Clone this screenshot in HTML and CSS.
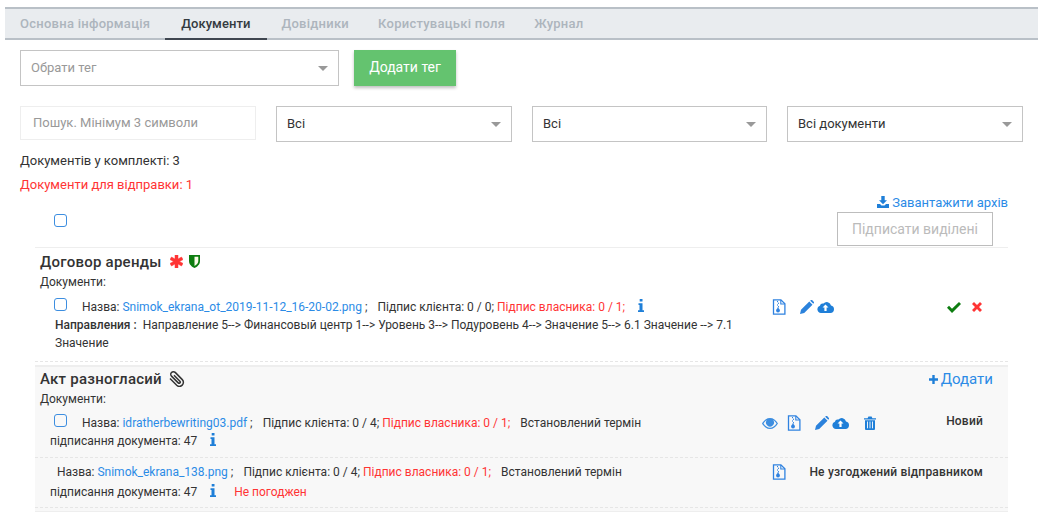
FILE: index.html
```html
<!DOCTYPE html>
<html lang="uk">
<head>
<meta charset="utf-8">
<title>Документи</title>
<link rel="stylesheet" href="styles.css">
</head>
<body>
<svg class="defs" aria-hidden="true">
  <symbol id="i-zip" viewBox="0 0 14 16"><path d="M1.5 .8h7.4l4 4v10.4h-11.400z" fill="none" stroke="currentColor" stroke-width="1.300"/><path d="M8.800 1v4h4" fill="none" stroke="currentColor" stroke-width="1.100"/><path d="M5.500 2v1.200M6.500 3.700v1.200M5.500 5.400v1.200M6.500 7.100v1.200" stroke="currentColor" stroke-width="1"/><circle cx="6" cy="11.500" r="1.900" fill="currentColor"/><rect x="5.300" y="8.500" width="1.400" height="2" fill="currentColor"/></symbol>
  <symbol id="i-pencil" viewBox="0 0 14 14"><path d="M0 14l1-4.200L9.300 1.500l3.200 3.200L4.200 13zM10.200.7l.7-.6c.4-.3.9-.3 1.200 0l1.800 1.800c.3.3.3.800 0 1.200l-.6.7z" fill="currentColor"/></symbol>
  <symbol id="i-cloud" viewBox="0 0 17 12"><path d="M4 12A3.700 3.700 0 0 1 2.900 4.800 3 3 0 0 1 6.500 2.600 4.300 4.300 0 0 1 14 4.500 3.800 3.800 0 0 1 13.500 12z" fill="currentColor"/><path d="M8.500 3.500l3 3H9.600V10H7.400V6.500H5.500z" fill="#fff"/></symbol>
  <symbol id="i-eye" viewBox="0 0 16 11"><path d="M0 5.500C2 2 4.800 0 8 0s6 2 8 5.500C14 9 11.200 11 8 11S2 9 0 5.500zm1.500 0C3.200 8 5.400 9.800 8 9.800s4.800-1.800 6.500-4.300C13.600 4.200 12.600 3 11.300 2.300a4 4 0 1 1-6.600 0C3.400 3 2.400 4.200 1.500 5.500z" fill="currentColor" fill-rule="evenodd"/><circle cx="8" cy="4.500" r="3.200" fill="currentColor"/></symbol>
  <symbol id="i-trash" viewBox="0 0 12 14"><path d="M0 2.200h3.600L4.400.6h3.200l.8 1.600H12v1.300H0zM1 4.300h10V13a1 1 0 0 1-1 1H2a1 1 0 0 1-1-1z" fill="currentColor"/><path d="M3.500 5.500v6.800M6 5.500v6.800M8.500 5.500v6.800" stroke="#fff" stroke-width=".9"/></symbol>
  <symbol id="i-check" viewBox="0 0 14 11"><path d="M0 5.800l2-2 3 3L12 0l2 2-9 9z" fill="currentColor"/></symbol>
  <symbol id="i-times" viewBox="0 0 11 11"><path d="M0 2.200L2.200 0l3.300 3.300L8.800 0 11 2.200 7.700 5.500 11 8.800 8.800 11 5.500 7.700 2.200 11 0 8.800l3.300-3.300z" fill="currentColor"/></symbol>
  <symbol id="i-info" viewBox="0 0 6 13"><path d="M1.700 0h2.800v2.600H1.700zM.5 4.300h4v6.900H6V13H0v-1.800h1.500V6.100H.5z" fill="currentColor"/></symbol>
  <symbol id="i-plus" viewBox="0 0 9 9"><path d="M3.300 0h2.400v3.300H9v2.400H5.700V9H3.300V5.700H0V3.300h3.300z" fill="currentColor"/></symbol>
  <symbol id="i-star" viewBox="0 0 13 13"><path d="M5 0h3v4l3.500-2 1.500 2.600-3.500 1.900L13 8.400 11.500 11 8 9v4H5V9l-3.500 2L0 8.400l3.500-1.900L0 4.600 1.500 2 5 4z" fill="currentColor" stroke="currentColor" stroke-width=".5"/></symbol>
  <symbol id="i-shield" viewBox="0 0 11 13"><path d="M0 0h11v6c0 3.500-2.800 5.800-5.500 7C2.800 11.800 0 9.500 0 6z" fill="#0d7d10"/><path d="M5.500 1.700h3.800v4.400c0 2.300-1.900 4-3.800 5z" fill="#fbfde8"/></symbol>
  <symbol id="i-clip" viewBox="0 0 17 17"><path d="M15 8.500L8.300 15.200c-1.600 1.500-4 1.400-5.500-.1-1.600-1.600-1.600-4-.1-5.500L9.800 2.400c1-1 2.700-1 3.700.1 1 1 1 2.600 0 3.600l-6.700 6.800c-.5.500-1.200.5-1.700 0s-.5-1.200 0-1.700L11 5.200" fill="none" stroke="currentColor" stroke-width="1.500"/></symbol>
  <symbol id="i-down" viewBox="0 0 12 12"><path d="M4.300 0h3.400v4.300H10L6 8.300l-4-4h2.300zM0 8h3l1.500 1.500h3L9 8h3v4H0z" fill="currentColor"/></symbol>
</svg>

<nav class="tabs">
  <a class="tab">Основна інформація</a>
  <a class="tab active">Документи</a>
  <a class="tab">Довідники</a>
  <a class="tab">Користувацькі поля</a>
  <a class="tab">Журнал</a>
</nav>

<main class="page">
  <div class="tag-row">
    <div class="select tag-select placeholder">Обрати тег<span class="caret"></span></div>
    <button class="btn-green">Додати тег</button>
  </div>

  <div class="filters">
    <div class="search">Пошук. Мінімум 3 символи</div>
    <div class="select">Всі<span class="caret"></span></div>
    <div class="select">Всі<span class="caret"></span></div>
    <div class="select">Всі документи<span class="caret"></span></div>
  </div>

  <p class="count">Документів у комплекті: 3</p>
  <p class="count red">Документи для відправки: 1</p>

  <div class="toolbar">
    <span class="box top-box"></span>
    <div class="toolbar-right">
      <a class="link archive"><svg class="ic-down"><use href="#i-down"/></svg>Завантажити архів</a>
      <button class="btn-outline">Підписати виділені</button>
    </div>
  </div>

  <section class="group first">
    <h3 class="group-title">Договор аренды<svg class="ic-star"><use href="#i-star"/></svg><svg class="ic-shield"><use href="#i-shield"/></svg></h3>
    <div class="docs-label">Документи:</div>
    <div class="doc doc-a">
      <div class="doc-text">
        <span class="box"></span><span class="lead">Назва: <a class="link">Snimok_ekrana_ot_2019-11-12_16-20-02.png</a> ;</span><span class="gap">Підпис клієнта: 0 / 0;</span> <span class="red">Підпис власника: 0 / 1;</span><svg class="ic-info"><use href="#i-info"/></svg><br>
        <span class="indent"><b class="strong">Направления :</b> Направление 5--&gt; Финансовый центр 1--&gt; Уровень 3--&gt; Подуровень 4--&gt; Значение 5--&gt; 6.1 Значение --&gt; 7.1<br>Значение</span>
      </div>
      <div class="doc-icons first-icons">
        <svg class="ic-zip"><use href="#i-zip"/></svg>
        <svg class="ic-pencil"><use href="#i-pencil"/></svg>
        <svg class="ic-cloud"><use href="#i-cloud"/></svg>
      </div>
      <div class="doc-status marks">
        <svg class="ic-check"><use href="#i-check"/></svg>
        <svg class="ic-times"><use href="#i-times"/></svg>
      </div>
    </div>
  </section>

  <section class="group shaded">
    <div class="title-row">
      <h3 class="group-title">Акт разногласий<svg class="ic-clip"><use href="#i-clip"/></svg></h3>
      <a class="link add"><svg class="ic-plus"><use href="#i-plus"/></svg>Додати</a>
    </div>
    <div class="docs-label">Документи:</div>
    <div class="doc doc-b">
      <div class="doc-text">
        <span class="box"></span><span class="lead">Назва: <a class="link">idratherbewriting03.pdf</a> ;</span><span class="gap">Підпис клієнта: 0 / 4;</span> <span class="red">Підпис власника: 0 / 1;</span><span class="gap">Встановлений термін</span><br>
        підписання документа: 47<svg class="ic-info"><use href="#i-info"/></svg>
      </div>
      <div class="doc-icons second-icons">
        <svg class="ic-eye"><use href="#i-eye"/></svg>
        <svg class="ic-zip"><use href="#i-zip"/></svg>
        <svg class="ic-pencil"><use href="#i-pencil"/></svg>
        <svg class="ic-cloud"><use href="#i-cloud"/></svg>
        <svg class="ic-trash"><use href="#i-trash"/></svg>
      </div>
      <div class="doc-status status-up">Новий</div>
    </div>
    <div class="doc doc-c">
      <div class="doc-text">
        <span class="lead plain">Назва: <a class="link">Snimok_ekrana_138.png</a> ;</span><span class="gap">Підпис клієнта: 0 / 4;</span> <span class="red">Підпис власника: 0 / 1;</span><span class="gap">Встановлений термін</span><br>
        підписання документа: 47<svg class="ic-info"><use href="#i-info"/></svg><span class="red refuse">Не погоджен</span>
      </div>
      <div class="doc-icons third-icons">
        <svg class="ic-zip"><use href="#i-zip"/></svg>
      </div>
      <div class="doc-status wide">Не узгоджений відправником</div>
    </div>
  </section>
</main>
</body>
</html>
```

FILE: styles.css
```css
* { box-sizing: border-box; }
html, body { margin: 0; padding: 0; overflow: hidden; height: 512px; }
body { background: #fff; color: #333; font-family: Roboto, "Liberation Sans", sans-serif; font-size: 12px; }
p { margin: 0; }
.defs { position: absolute; width: 0; height: 0; }
svg { display: inline-block; }

.tabs { display: flex; height: 33px; margin: 7px 5px 0; background: #e9ecef; border-top: 2px solid #b9c0c7; border-bottom: 2px solid #b9c0c7; }
.tab { padding: 0 14.500px; height: 31px; line-height: 30px; font-size: 13px; font-weight: 500; color: #adb5bd; letter-spacing: .26px; }
.tab:first-child { padding-left: 15px; }
.tab.active { color: #343a40; border-bottom: 2px solid #3f4650; padding: 0 16.500px; letter-spacing: .05px; }

.page { padding: 0 20px; }
.tag-row { display: flex; gap: 15px; margin-top: 10px; }
.select { position: relative; height: 36px; line-height: 34px; border: 1px solid #c4c4c4; padding: 0 10px; font-size: 13px; color: #333; background: #fff; }
.tag-select { width: 319px; }
.placeholder { color: #999; }
.caret { position: absolute; right: 10px; top: 15px; width: 0; height: 0; border-left: 5px solid transparent; border-right: 5px solid transparent; border-top: 5px solid #999; }
.btn-green { width: 102px; height: 36px; border: 0; background: #64c36f; color: #fff; font: 14px Roboto, sans-serif; box-shadow: 0 2px 3px rgba(0,0,0,.25); padding: 0 0 2px; }

.filters { display: grid; grid-template-columns: 236px 236px 235px 236px; column-gap: 20px; margin-top: 20px; }
.search { height: 34px; line-height: 31px; border: 1px solid #eee; padding: 0 12px; font-size: 13px; color: #999; }

.count { font-size: 13px; line-height: 15px; margin-top: 11px; color: #333; }
.count.red { margin-top: 9px; }
.red, .count.red { color: #ff3434; }

.toolbar { display: flex; justify-content: space-between; margin-left: 34px; padding-right: 15px; height: 52px; margin-top: 3px; }
.box { display: inline-block; width: 13px; height: 13px; border: 1.500px solid #3d8ee0; border-radius: 3px; background: transparent; }
.top-box { margin-top: 19px; }
.toolbar-right { display: flex; flex-direction: column; align-items: flex-end; }
.link { color: #2b8be6; }
.archive { font-size: 13px; line-height: 16px; }
.ic-down { width: 12px; height: 12px; color: #1f7fd8; margin-right: 3px; vertical-align: -1px; }
.btn-outline { width: 156px; height: 34px; margin: 1px 15px 0 0; border: 1px solid #bdbdbd; background: #fff; color: #bbb; font: 14px Roboto, sans-serif; padding: 0; }

.group { margin: 0 15px; }
.first { border-top: 1px solid #eee; height: 118px; }
.shaded { background: #f8f8f8; border-top: 2px solid #eee; border-bottom: 2px solid #eee; height: 148px; }
.group-title { margin: 0; padding-left: 5px; font-size: 15px; font-weight: 500; line-height: 18px; color: #333; letter-spacing: .25px; }
.first .group-title { padding-top: 5px; }
.docs-label { padding-left: 5px; line-height: 16px; margin-top: 3px; }
.ic-star { width: 13px; height: 13px; color: #ff3434; margin-left: 8px; vertical-align: -1px; }
.ic-shield { width: 11px; height: 13px; margin-left: 6px; vertical-align: -1px; }
.ic-clip { width: 17px; height: 17px; color: #333; margin-left: 6px; vertical-align: -3px; transform: scaleX(-1); }

.title-row { display: flex; justify-content: space-between; padding-right: 15px; padding-top: 3px; }
.add { font-size: 15px; line-height: 18px; }
.ic-plus { width: 9px; height: 9px; color: #1f7fd8; margin-right: 3px; }

.doc { display: flex; border-bottom: 1px dashed #e6e6e6; line-height: 18px; }
.doc-text { width: 712px; padding-left: 15px; flex: none; }
.lead { margin-left: 15px; }
.lead.plain { margin-left: 7px; }
.gap { margin-left: 10px; }
.doc-text .box { vertical-align: 0; margin-left: 4px; }
.indent { display: inline-block; padding-left: 5px; }
.strong { font-weight: 500; margin-right: 3px; }
.doc-a { height: 64px; margin-top: 8px; }
.doc-a .doc-text { width: 722px; }
.doc-b { height: 44px; margin-top: 7px; }
.doc-c { height: 50px; padding-top: 4px; line-height: 20px; }
.doc-icons { display: flex; align-items: center; height: 18px; }
.first-icons { margin-left: 15px; }
.ic-zip { width: 14px; height: 16px; color: #2f82e0; }
.ic-pencil { width: 14px; height: 14px; color: #2b82dc; }
.ic-cloud { width: 17px; height: 12px; color: #1f7fd8; }
.ic-eye { width: 16px; height: 11px; color: #3d8ee0; }
.ic-trash { width: 12px; height: 14px; color: #1f7fd8; }
.ic-check { width: 14px; height: 11px; color: #0d7d10; }
.ic-times { width: 10px; height: 10px; color: #ff3434; margin-left: 11px; }
.ic-info { width: 6px; height: 13px; color: #1f7fd8; margin-left: 13px; vertical-align: -1px; }
.first-icons .ic-pencil { margin-left: 14px; }
.first-icons .ic-cloud { margin-left: 3px; }
.second-icons .ic-eye { margin-left: 15px; }
.second-icons .ic-zip { margin-left: 9px; }
.second-icons .ic-pencil { margin-left: 14px; }
.second-icons .ic-cloud { margin-left: 3px; }
.second-icons .ic-trash { margin-left: 15px; }
.third-icons { margin-left: 25px; margin-top: 1px; }
.doc-status { margin-left: auto; margin-right: 25px; font-weight: 500; color: #333; letter-spacing: .2px; }
.status-up { margin-top: -2px; }
.marks { display: flex; align-items: center; height: 18px; margin-right: 26px; }
.refuse { margin-left: 18px; }
```
